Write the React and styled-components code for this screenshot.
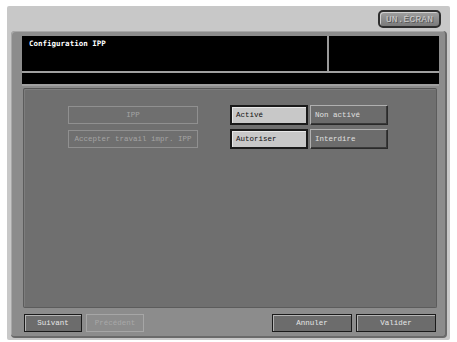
import React from "react";
import styled, { createGlobalStyle, css } from "styled-components";

const Global = createGlobalStyle`
  html, body { margin: 0; padding: 0; background: #ffffff; }
  body { font-family: "Liberation Mono", "DejaVu Sans Mono", monospace; }
`;

const Screen = styled.div`
  position: relative;
  margin: 6px 0 0 7px;
  width: 443px;
  height: 334px;
  background: #c8c8c8;
  box-sizing: border-box;
  padding: 4px 3px 2px 4px;
  display: flex;
  flex-direction: column;
  border-radius: 2px;
`;

const TopBar = styled.div`
  height: 21px;
  display: flex;
  justify-content: flex-end;
  align-items: flex-start;
  padding-right: 6px;
`;

const TopButton = styled.div`
  width: 63px;
  height: 18px;
  box-sizing: border-box;
  border: 2px solid #2e2e2e;
  border-radius: 5px;
  background: linear-gradient(#a0a0a0, #8c8c8c 50%, #7a7a7a);
  box-shadow: inset 1px 1px 0 #d0d0d0;
  display: flex;
  align-items: center;
  justify-content: center;
  color: #cdcdcd;
  font-size: 9.5px;
  letter-spacing: 0.2px;
  text-shadow: 1px 1px 0 #555;
`;

const Panel = styled.div`
  flex: 1;
  background: #8c8c8c;
  border-radius: 4px;
  border-right: 2px solid #6a6a6a;
  border-bottom: 2px solid #6a6a6a;
  box-shadow: inset 1px 1px 0 #a8a8a8;
  padding: 5px 6px 0 11px;
  display: flex;
  flex-direction: column;
`;

const Header = styled.div`
  background: #000;
  display: flex;
  height: 35px;
`;

const Title = styled.div`
  flex: 1;
  color: #fff;
  font-family: "DejaVu Sans Mono", monospace;
  font-weight: bold;
  font-size: 7.5px;
  padding: 3px 7px;
  border-right: 2px solid #9a9a9a;
`;

const TitleSide = styled.div`
  width: 110px;
`;

const Divider = styled.div`
  height: 2px;
  background: #a0a0a0;
`;

const Strip = styled.div`
  height: 11px;
  background: #000;
`;

const Gap = styled.div`
  height: 2px;
`;

const Content = styled.div`
  flex: 1;
  margin: 0 2px 0 1px;
  background: #6f6f6f;
  border: 1px solid #5c5c5c;
  border-top-color: #555;
  box-shadow: inset 1px 1px 0 #7d7d7d;
  border-radius: 2px;
  padding: 16px 0 0 44px;
  display: flex;
  flex-direction: column;
  gap: 4px;
`;

const Row = styled.div`
  display: flex;
  align-items: center;
`;

const Label = styled.div`
  width: 130px;
  height: 18px;
  box-sizing: border-box;
  border: 1px solid #909090;
  color: #a4a4a4;
  font-size: 7.5px;
  display: flex;
  align-items: center;
  justify-content: center;
  margin-right: 32px;
`;

const Choice = styled.div`
  width: 78px;
  height: 20px;
  box-sizing: border-box;
  font-size: 7.5px;
  display: flex;
  align-items: center;
  padding-left: 4px;
  margin-right: 2px;
  ${(p) =>
    p.$active
      ? css`
          background: #c8c8c8;
          color: #111;
          border: 2px solid #1a1a1a;
          box-shadow: inset 1px 1px 0 #e8e8e8;
        `
      : css`
          background: #6c6c6c;
          color: #e0e0e0;
          border: 1px solid #2a2a2a;
          border-top-color: #b0b0b0;
          border-left-color: #b0b0b0;
          box-shadow: inset -1px -1px 0 #3a3a3a;
        `}
`;

const Footer = styled.div`
  display: flex;
  align-items: center;
  padding: 6px 3px 4px 2px;
  gap: 4px;
`;

const Spacer = styled.div`
  flex: 1;
`;

const FootButton = styled.div`
  width: ${(p) => p.$w}px;
  height: 18px;
  box-sizing: border-box;
  font-size: 7.5px;
  display: flex;
  align-items: center;
  justify-content: center;
  ${(p) =>
    p.$disabled
      ? css`
          border: 1px solid #a6a6a6;
          color: #a8a8a8;
          background: #8c8c8c;
        `
      : css`
          background: #6c6c6c;
          color: #e6e6e6;
          border: 1px solid #1a1a1a;
          box-shadow: inset 1px 1px 0 #b4b4b4;
        `}
`;

export default function App() {
  return (
    <>
      <Global />
      <Screen>
        <TopBar>
          <TopButton>UN.ÉCRAN</TopButton>
        </TopBar>
        <Panel>
          <Header>
            <Title>Configuration IPP</Title>
            <TitleSide />
          </Header>
          <Divider />
          <Strip />
          <Divider />
          <Gap />
          <Content>
            <Row>
              <Label>IPP</Label>
              <Choice $active>Activé</Choice>
              <Choice>Non activé</Choice>
            </Row>
            <Row>
              <Label>Accepter travail impr. IPP</Label>
              <Choice $active>Autoriser</Choice>
              <Choice>Interdire</Choice>
            </Row>
          </Content>
          <Footer>
            <FootButton $w={58}>Suivant</FootButton>
            <FootButton $w={58} $disabled>
              Précédent
            </FootButton>
            <Spacer />
            <FootButton $w={80}>Annuler</FootButton>
            <FootButton $w={80}>Valider</FootButton>
          </Footer>
        </Panel>
      </Screen>
    </>
  );
}
